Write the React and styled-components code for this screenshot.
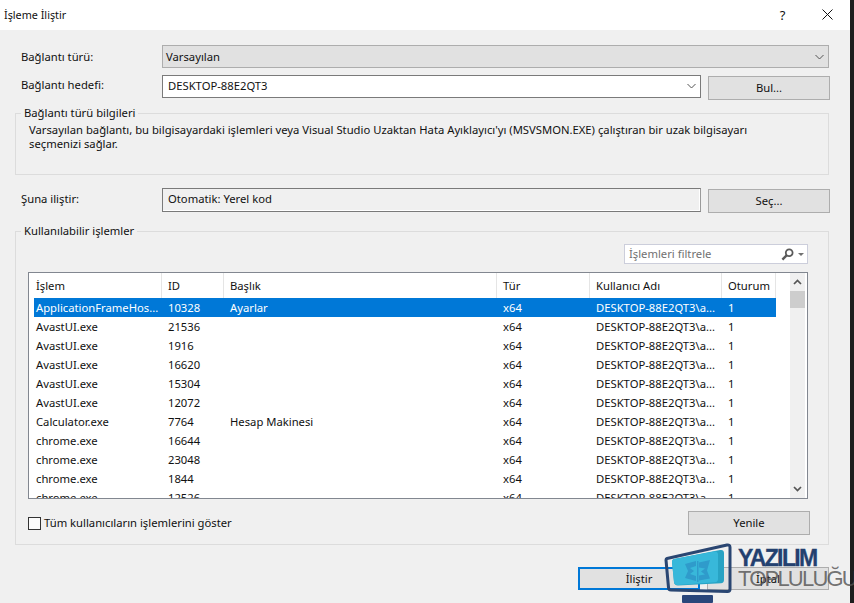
import React from "react";
import styled, { createGlobalStyle } from "styled-components";

const Global = createGlobalStyle`
  html, body { margin: 0; padding: 0; background: #1e1e1e; overflow: hidden; }
  * { box-sizing: border-box; }
`;

const Page = styled.div`
  position: relative;
  width: 854px;
  height: 603px;
  overflow: hidden;
  display: flex;
  background: #1e1e1e;
  font-family: "Noto Sans", "Liberation Sans", sans-serif;
  font-size: 11.25px;
  line-height: 14px;
  color: #111;
`;

const Window = styled.div`
  width: 850px;
  height: 603px;
  display: flex;
  flex-direction: column;
  background: #f0f0f0;
`;

const TitleBar = styled.div`
  height: 30px;
  flex: none;
  display: flex;
  align-items: center;
  background: #fff;
  padding-left: 4px;
`;

const Title = styled.div`
  flex: 1;
  font-size: 10.8px;
`;

const CaptionButton = styled.div`
  width: 45px;
  height: 30px;
  display: flex;
  align-items: center;
  justify-content: center;
  font-size: 13px;
  padding-bottom: 1px;
`;

const Body = styled.div`
  flex: 1;
  display: flex;
  flex-direction: column;
  padding: 15px 21px 0 15px;
`;

const FormRow = styled.div`
  display: grid;
  grid-template-columns: 134px 539px 122px;
  grid-template-rows: ${(p) => p.$height}px;
  column-gap: 7px;
  padding-left: 6px;
  margin-top: ${(p) => p.$top || 0}px;
  align-items: center;
`;

const Label = styled.label`
  display: block;
  margin-top: ${(p) => p.$shift || 0}px;
`;

const Combo = styled.div`
  grid-column: 2 / 4;
  height: 23px;
  margin-right: 1px;
  display: flex;
  align-items: center;
  justify-content: space-between;
  padding: 0 4px 0 3px;
  background: #e1e1e1;
  border: 1px solid #adadad;
`;

const TextField = styled.div`
  height: 23px;
  display: flex;
  align-items: center;
  justify-content: space-between;
  padding: 0 4px 2px 5px;
  background: #fff;
  border: 1px solid #7a7a7a;
`;

const ReadOnlyField = styled.div`
  height: 24px;
  display: flex;
  align-items: center;
  padding: 0 0 2px 5px;
  background: #f0f0f0;
  border: 1px solid #7a7a7a;
  border-right-color: #9a9a9a;
  box-shadow: inset -1px -1px 0 #fff;
`;

const Button = styled.button`
  width: 122px;
  height: ${(p) => p.$height || 24}px;
  margin: 0;
  padding: 0;
  align-self: start;
  margin-top: ${(p) => p.$top || 0}px;
  background: #e1e1e1;
  border: ${(p) => (p.$primary ? "2px solid #0078d7" : "1px solid #adadad")};
  font: inherit;
  color: #111;
`;

const Group = styled.fieldset`
  margin: ${(p) => p.$top}px 0 0;
  height: ${(p) => p.$height}px;
  padding: ${(p) => p.$pad};
  min-width: 0;
  border: 1px solid #dcdcdc;
`;

const Legend = styled.legend`
  margin-left: ${(p) => p.$left}px;
  padding: 0 3px;
  line-height: 14px;
`;

const Info = styled.p`
  margin: 0;
  width: 740px;
`;

const FilterRow = styled.div`
  display: flex;
  justify-content: flex-end;
`;

const Filter = styled.div`
  width: 184px;
  height: 20px;
  display: flex;
  align-items: center;
  justify-content: space-between;
  padding: 0 3px 0 4px;
  background: #fff;
  border: 1px solid #cccedb;
  color: #717171;
`;

const FilterIcons = styled.span`
  display: flex;
  align-items: center;
  gap: 4px;
`;

const ListBox = styled.div`
  margin-top: 8px;
  height: 227px;
  display: flex;
  background: #fff;
  border: 1px solid #828790;
`;

const ListInner = styled.div`
  flex: 1;
  min-width: 0;
  padding-left: 5px;
  overflow: hidden;
`;

const Columns = styled.div`
  display: grid;
  width: 742px;
  grid-template-columns: 128px 62px 273px 93px 132px 54px;
`;

const HeaderRow = styled(Columns)`
  height: 25px;
  align-items: stretch;
`;

const HeaderCell = styled.div`
  display: flex;
  align-items: center;
  padding-left: ${(p) => (p.$first ? 2 : 6)}px;
  border-right: 1px solid #e5e5e5;
`;

const Row = styled(Columns)`
  height: 19px;
  align-items: center;
  background: ${(p) => (p.$selected ? "#0078d7" : "transparent")};
  color: ${(p) => (p.$selected ? "#fff" : "#111")};
`;

const Cell = styled.div`
  padding-left: ${(p) => (p.$first ? 2 : 6)}px;
  white-space: nowrap;
`;

const ScrollBar = styled.div`
  width: 15px;
  margin-right: 2px;
  display: flex;
  flex-direction: column;
  background: #f0f0f0;
`;

const ScrollArrow = styled.div`
  height: 18px;
  flex: none;
  display: flex;
  align-items: center;
  justify-content: center;
`;

const ScrollThumb = styled.div`
  height: 17px;
  flex: none;
  background: #cdcdcd;
`;

const ScrollTrack = styled.div`
  flex: 1;
`;

const BottomRow = styled.div`
  margin-top: 12px;
  display: flex;
  align-items: center;
  justify-content: space-between;
  margin-right: -2px;
`;

const CheckLabel = styled.label`
  display: flex;
  align-items: center;
  gap: 3px;
`;

const CheckBox = styled.span`
  width: 13px;
  height: 13px;
  background: #fbfbfb;
  border: 1px solid #333;
`;

const Actions = styled.div`
  margin-top: 22px;
  display: flex;
  justify-content: flex-end;
  gap: 7px;
`;

const Strip = styled.div`
  flex: 1;
  background: #1e1e1e;
`;

const Brand = styled.div`
  position: absolute;
  left: 664px;
  top: 543px;
  display: flex;
  gap: 6px;
  pointer-events: none;
`;

const BrandText = styled.div`
  display: flex;
  flex-direction: column;
  padding-top: 6px;
  font-family: "Liberation Sans", sans-serif;
  font-size: 23px;
  line-height: 19px;
  white-space: nowrap;
`;

const BrandTop = styled.span`
  font-weight: 700;
  color: #23406f;
  letter-spacing: -1.6px;
  -webkit-text-stroke: 0.3px #23406f;
`;

const BrandBottom = styled.span`
  margin-top: 1px;
  font-size: 22px;
  color: rgba(80, 80, 80, 0.8);
  letter-spacing: -1.8px;
`;

const Chevron = () => (
  <svg width="9" height="6" viewBox="0 0 9 6" fill="none">
    <path d="M.5 1l4 4 4-4" stroke="#555" strokeWidth="1" />
  </svg>
);

const CloseIcon = () => (
  <svg width="11" height="11" viewBox="0 0 11 11" fill="none">
    <path d="M.5.5l10 10M10.5.5l-10 10" stroke="#111" strokeWidth="1" />
  </svg>
);

const SearchIcon = () => (
  <svg width="13" height="13" viewBox="0 0 13 13" fill="none">
    <circle cx="8.2" cy="4.8" r="3.4" stroke="#5a5a5a" strokeWidth="1.8" />
    <path d="M5.8 7.2L1.4 11.6" stroke="#5a5a5a" strokeWidth="2.4" />
  </svg>
);

const Caret = () => (
  <svg width="6" height="3" viewBox="0 0 6 3">
    <path d="M0 0h6L3 3z" fill="#717171" />
  </svg>
);

const ScrollChevron = ({ down }) => (
  <svg width="9" height="6" viewBox="0 0 9 6" fill="none">
    <path d={down ? "M1 1l3.500 3.500L8 1" : "M1 5l3.500-3.500L8 5"} stroke="#555" strokeWidth="1.7" />
  </svg>
);

const Monitor = () => (
  <svg width="68" height="60" viewBox="0 0 68 60">
    <rect x="18" y="52" width="31" height="8" rx="1" fill="#29467a" />
    <path
      d="M3 15.500L63 2c2-.4 3 .6 3 2.500V46c0 1.500-1 2.500-2.500 2.500L7 47c-1.500 0-2.500-1-2.500-2.500L2 17c0-.8.300-1.300 1-1.500z"
      fill="none"
      stroke="#2a4672"
      strokeWidth="3"
      strokeLinejoin="round"
    />
    <path
      d="M10 16L56 7c2.500-.5 4 .5 4 3v27c0 2-1 3-3 3.200L14 42.500c-2.500 0-4-1.500-4-3.500L8 19c0-1.500.6-2.600 2-3z"
      fill="#28a3c4"
    />
    <path
      d="M10 16L50 8.500c2.500-.5 4 .5 4 3V36c0 2-1 3-3 3.200L14 42c-2.500 0-4-1-4-3L8 19c0-1.500.6-2.600 2-3z"
      fill="#38b8da"
    />
    <path
      d="M21 21l11-3v5l-6 2 4 3-4 3 6 2v5l-11-3 3-7zM46 17l-11 2.500v5l6 1-4 3 4 3-6 1v5l11-2-3-8z"
      fill="#2f9bcb"
    />
    <path d="M33 18h1.500v21H33z" fill="#2f9bcb" />
  </svg>
);

const processes = [
  ["ApplicationFrameHos...", "10328", "Ayarlar"],
  ["AvastUI.exe", "21536", ""],
  ["AvastUI.exe", "1916", ""],
  ["AvastUI.exe", "16620", ""],
  ["AvastUI.exe", "15304", ""],
  ["AvastUI.exe", "12072", ""],
  ["Calculator.exe", "7764", "Hesap Makinesi"],
  ["chrome.exe", "16644", ""],
  ["chrome.exe", "23048", ""],
  ["chrome.exe", "1844", ""],
  ["chrome.exe", "12526", ""],
];

const headers = ["İşlem", "ID", "Başlık", "Tür", "Kullanıcı Adı", "Oturum"];

export default function App() {
  return (
    <Page>
      <Global />
      <Window>
        <TitleBar>
          <Title>İşleme İliştir</Title>
          <CaptionButton>?</CaptionButton>
          <CaptionButton>
            <CloseIcon />
          </CaptionButton>
        </TitleBar>
        <Body>
          <FormRow $height={23}>
            <Label>Bağlantı türü:</Label>
            <Combo>
              <span>Varsayılan</span>
              <Chevron />
            </Combo>
          </FormRow>
          <FormRow $height={23} $top={7}>
            <Label $shift={-3}>Bağlantı hedefi:</Label>
            <TextField>
              <span>DESKTOP-88E2QT3</span>
              <Chevron />
            </TextField>
            <Button $top={1}>Bul...</Button>
          </FormRow>
          <Group $top={8} $height={69} $pad="3px 0 0 13px">
            <Legend $left={-8}>Bağlantı türü bilgileri</Legend>
            <Info>
              Varsayılan bağlantı, bu bilgisayardaki işlemleri veya Visual Studio Uzaktan Hata
              Ayıklayıcı'yı (MSVSMON.EXE) çalıştıran bir uzak bilgisayarı seçmenizi sağlar.
            </Info>
          </Group>
          <FormRow $height={24} $top={13}>
            <Label $shift={-2}>Şuna iliştir:</Label>
            <ReadOnlyField>Otomatik: Yerel kod</ReadOnlyField>
            <Button $top={1}>Seç...</Button>
          </FormRow>
          <Group $top={12} $height={321} $pad="6px 20px 0 12px">
            <Legend $left={-7}>Kullanılabilir işlemler</Legend>
            <FilterRow>
              <Filter>
                <span>İşlemleri filtrele</span>
                <FilterIcons>
                  <SearchIcon />
                  <Caret />
                </FilterIcons>
              </Filter>
            </FilterRow>
            <ListBox>
              <ListInner>
                <HeaderRow>
                  {headers.map((h, i) => (
                    <HeaderCell key={h} $first={i === 0}>
                      {h}
                    </HeaderCell>
                  ))}
                </HeaderRow>
                {processes.map((p, i) => (
                  <Row key={p[0] + p[1]} $selected={i === 0}>
                    <Cell $first>{p[0]}</Cell>
                    <Cell>{p[1]}</Cell>
                    <Cell>{p[2]}</Cell>
                    <Cell>x64</Cell>
                    <Cell>DESKTOP-88E2QT3\a...</Cell>
                    <Cell>1</Cell>
                  </Row>
                ))}
              </ListInner>
              <ScrollBar>
                <ScrollArrow>
                  <ScrollChevron />
                </ScrollArrow>
                <ScrollThumb />
                <ScrollTrack />
                <ScrollArrow>
                  <ScrollChevron down />
                </ScrollArrow>
              </ScrollBar>
            </ListBox>
            <BottomRow>
              <CheckLabel>
                <CheckBox />
                Tüm kullanıcıların işlemlerini göster
              </CheckLabel>
              <Button>Yenile</Button>
            </BottomRow>
          </Group>
          <Actions>
            <Button $primary $height={23}>İliştir</Button>
            <Button $height={23}>İptal</Button>
          </Actions>
        </Body>
      </Window>
      <Strip />
      <Brand>
        <Monitor />
        <BrandText>
          <BrandTop>YAZILIM</BrandTop>
          <BrandBottom>TOPLULUĞU</BrandBottom>
        </BrandText>
      </Brand>
    </Page>
  );
}
